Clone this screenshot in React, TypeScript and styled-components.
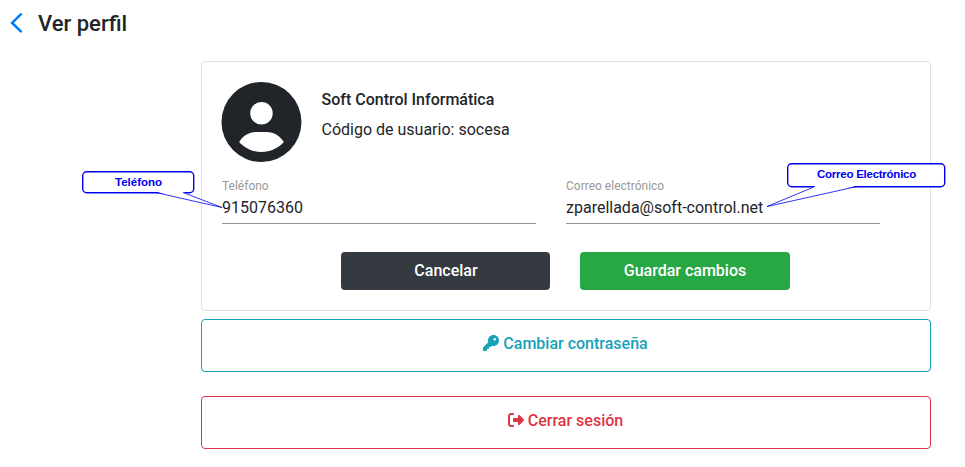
import React from "react";
import styled, { createGlobalStyle } from "styled-components";
import { FaCircleUser, FaKey, FaRightFromBracket } from "react-icons/fa6";

const GlobalStyle = createGlobalStyle`
  *, *::before, *::after { box-sizing: border-box; }
  body {
    margin: 0;
    background: #fff;
    color: #212529;
    font-family: Roboto, sans-serif;
    font-size: 16px;
    line-height: 24px;
    overflow: hidden;
  }
`;

const Page = styled.div`
  position: relative;
  width: 965px;
  height: 467px;
`;

const Header = styled.header`
  display: flex;
  align-items: center;
  gap: 15px;
  height: 61px;
  padding: 0 0 15px 10px;
`;

const BackIcon = styled.svg`
  display: block;
  width: 13px;
  height: 20px;
  color: #007bff;
`;

const Title = styled.h1`
  margin: 0;
  padding-top: 1px;
  font-size: 22px;
  font-weight: 500;
  line-height: 26px;
`;

const Content = styled.main`
  display: flex;
  flex-direction: column;
  width: 730px;
  margin-left: 201px;
`;

const Card = styled.section`
  height: 250px;
  padding: 20px;
  border: 1px solid #dfdfdf;
  border-radius: 4px;
`;

const UserRow = styled.div`
  display: flex;
  gap: 20.5px;
  height: 80px;
  margin-left: -1px;
`;

const Avatar = styled(FaCircleUser)`
  width: 80px;
  height: 80px;
  flex: none;
  overflow: visible;

  path {
    transform: translateX(3px);
  }
`;

const UserInfo = styled.div`
  display: flex;
  flex-direction: column;
  gap: 6px;
  padding-top: 6px;
`;

const UserName = styled.div`
  font-weight: 500;
`;

const Fields = styled.div`
  display: grid;
  grid-template-columns: 314px 314px;
  column-gap: 30px;
  margin-top: 14px;
`;

const Field = styled.label`
  display: flex;
  flex-direction: column;
  height: 48px;
  border-bottom: 1px solid #949494;
`;

const FieldLabel = styled.span`
  height: 20px;
  font-size: 12px;
  line-height: 20px;
  color: #999;
`;

const Actions = styled.div`
  display: flex;
  gap: 30px;
  margin: 28px 0 0 119px;
`;

const Button = styled.button<{ $color: string; $width: number }>`
  width: ${(p) => p.$width}px;
  height: 38px;
  padding: 0;
  border: 0;
  border-radius: 4px;
  background: ${(p) => p.$color};
  color: #fff;
  font: 500 16px/24px Roboto, sans-serif;
`;

const CancelButton = styled(Button)`
  padding-left: 1px;
`;

const OutlineButton = styled.button<{ $color: string; $gap: number }>`
  display: flex;
  align-items: center;
  justify-content: center;
  gap: 4px;
  height: 53px;
  margin-top: ${(p) => p.$gap}px;
  padding: 0 1px 4px 0;
  border: 1px solid ${(p) => p.$color};
  border-radius: 4px;
  background: #fff;
  color: ${(p) => p.$color};
  font: 500 16px/24px Roboto, sans-serif;

  svg {
    margin-bottom: 2px;
  }
`;

const Callout = styled.div<{ $x: number; $y: number; $w: number; $h: number }>`
  position: absolute;
  left: ${(p) => p.$x}px;
  top: ${(p) => p.$y}px;
  width: ${(p) => p.$w}px;
  height: ${(p) => p.$h}px;
`;

const CalloutShape = styled.svg`
  position: absolute;
  inset: 0;
  overflow: visible;
`;

const CalloutText = styled.span<{ $spacing: number }>`
  position: relative;
  display: block;
  padding-top: 4px;
  text-align: center;
  white-space: nowrap;
  color: #0000f0;
  font: bold 11.5px/15px "Liberation Sans", Arial, sans-serif;
  letter-spacing: ${(p) => p.$spacing}px;
`;

export default function App() {
  return (
    <Page>
      <GlobalStyle />
      <Header>
        <BackIcon viewBox="0 0 13 20" fill="none" stroke="currentColor" strokeWidth="2.5">
          <path d="M10.8 1.4 2.1 9.9 10.8 18.4" strokeLinecap="round" />
        </BackIcon>
        <Title>Ver perfil</Title>
      </Header>
      <Content>
        <Card>
          <UserRow>
            <Avatar />
            <UserInfo>
              <UserName>Soft Control Informática</UserName>
              <div>Código de usuario: socesa</div>
            </UserInfo>
          </UserRow>
          <Fields>
            <Field>
              <FieldLabel>Teléfono</FieldLabel>
              <span>915076360</span>
            </Field>
            <Field>
              <FieldLabel>Correo electrónico</FieldLabel>
              <span>zparellada@soft-control.net</span>
            </Field>
          </Fields>
          <Actions>
            <CancelButton $color="#343a40" $width={209}>Cancelar</CancelButton>
            <Button $color="#28a745" $width={210}>Guardar cambios</Button>
          </Actions>
        </Card>
        <OutlineButton $color="#17a2b8" $gap={8}>
          <FaKey />
          <span>Cambiar contraseña</span>
        </OutlineButton>
        <OutlineButton $color="#dc3545" $gap={24}>
          <FaRightFromBracket />
          <span>Cerrar sesión</span>
        </OutlineButton>
      </Content>
      <Callout $x={82} $y={171} $w={113} $h={23}>
        <CalloutShape width="113" height="23">
          <rect x="0.7" y="0.7" width="111" height="21" rx="4" fill="#fff" stroke="#0000f0" strokeWidth="1.4" />
          <path d="M74 20.8 140 36.5 100 20.8z" fill="#fff" />
          <path d="M74 21.5 140 36.5 101 21.5" fill="none" stroke="#0000f0" strokeWidth="0.8" />
        </CalloutShape>
        <CalloutText $spacing={0}>Teléfono</CalloutText>
      </Callout>
      <Callout $x={787} $y={163} $w={159} $h={25}>
        <CalloutShape width="159" height="25">
          <rect x="0.7" y="0.7" width="157" height="23" rx="4" fill="#fff" stroke="#0000f0" strokeWidth="1.4" />
          <path d="M29 22.8-20 43.5 70 22.8z" fill="#fff" />
          <path d="M28 23.5-20 43.5 70 23.5" fill="none" stroke="#0000f0" strokeWidth="0.8" />
        </CalloutShape>
        <CalloutText $spacing={-0.25}>Correo Electrónico</CalloutText>
      </Callout>
    </Page>
  );
}
